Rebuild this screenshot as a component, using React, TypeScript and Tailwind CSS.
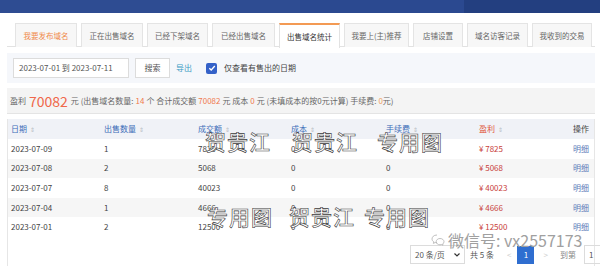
import React from "react";

const font = { fontFamily: '"Noto Sans CJK SC", "Noto Sans", sans-serif' };

const tabs = [
  { t: "我要发布域名", w: "w-[62px]", first: true },
  { t: "正在出售域名", w: "w-[62px]" },
  { t: "已经下架域名", w: "w-[61px]" },
  { t: "已经出售域名", w: "w-[63px]" },
  { t: "出售域名统计", w: "w-[61px]", active: true },
  { t: "我要上(主)推荐", w: "w-[65px]" },
  { t: "店铺设置", w: "w-[50px]" },
  { t: "域名访客记录", w: "w-[61px]" },
  { t: "我收到的交易", w: "w-[60px]" },
];

const rows = [
  ["2023-07-09", "1", "7825", "0", "0", "7825"],
  ["2023-07-08", "2", "5068", "0", "0", "5068"],
  ["2023-07-07", "8", "40023", "0", "0", "40023"],
  ["2023-07-04", "1", "4666", "0", "0", "4666"],
  ["2023-07-01", "2", "12500", "0", "0", "12500"],
];

const Sort = () => (
  <span className="ml-[3px] text-[#b8bcc4] text-[6px] leading-none">⇕</span>
);

const cols = "grid grid-cols-[93px_94px_93px_95px_93px_94px_1fr]";

const WM = ({ t, x, y }: { t: string; x: number; y: number }) => (
  <div
    className="absolute text-[21px] leading-none font-medium text-white tracking-[1px] [-webkit-text-stroke:0.6px_#3a3a3a]"
    style={{ left: x, top: y, ...font }}
  >
    {t}
  </div>
);

export default function App() {
  return (
    <div
      className="relative w-[600px] h-[266px] overflow-hidden bg-white text-[8px] text-[#444]"
      style={font}
    >
      {/* top bar */}
      <div className="flex h-[13px]">
        <div className="w-[300px] bg-[#2e4c92]" />
        <div className="w-[164px] bg-[#2b4990]" />
        <div className="flex-1 bg-[#233f80]" />
      </div>

      <div className="pl-[7px] pr-[5px]">
        {/* tabs */}
        <div className="mt-[10px] flex gap-[4px] pl-[8px] border-b border-[#e2e2e2] h-[24px]">
          {tabs.map((tb) => (
            <div
              key={tb.t}
              className={
                tb.w +
                " shrink-0 text-[7.5px] flex items-center justify-center border border-b-0 whitespace-nowrap " +
                (tb.active
                  ? "bg-white border-[#e2e2e2] border-t-[2px] border-t-[#f39a54] text-[#333] -mb-px h-[25px]"
                  : "h-[24px] bg-[#f7f7f7] border-[#e4e4e4] text-[#666]") +
                (tb.first ? " text-[#f0894a]" : "")
              }
            >
              {tb.t}
            </div>
          ))}
        </div>

        {/* filter row */}
        <div className="mt-[6px] h-[30px] bg-[#f5f7fb] flex items-center pl-[6px]">
          <div className="w-[116px] h-[20px] bg-white border border-[#dcdcdc] flex items-center pl-[5px] text-[#555]">
            2023-07-01 到 2023-07-11
          </div>
          <div className="ml-[6px] w-[35px] h-[20px] bg-white border border-[#dcdcdc] flex items-center justify-center text-[#555]">
            搜索
          </div>
          <div className="ml-[6px] text-[#3a9bc4]">导出</div>
          <div className="ml-[14px] w-[11px] h-[11px] rounded-[2px] bg-[#3461c8] flex items-center justify-center">
            <svg width="8" height="8" viewBox="0 0 8 8">
              <path d="M1.3 4.2 L3.2 6 L6.8 2" stroke="white" strokeWidth="1.3" fill="none" />
            </svg>
          </div>
          <div className="ml-[7px] text-[#444]">仅查看有售出的日期</div>
        </div>

        {/* summary */}
        <div className="mt-[5px] h-[26px] bg-[#f4f4f4] border-b border-[#e4e4e4] flex items-center pl-[3px] text-[#666] whitespace-nowrap">
          盈利 <span className="mx-[3px] text-[14px] text-[#f0674a] leading-none">70082</span> 元 (出售域名数量:{" "}
          <span className="mx-[2px] text-[#f07a4f]">14</span> 个 合计成交额{" "}
          <span className="mx-[2px] text-[#f07a4f]">70082</span> 元 成本{" "}
          <span className="mx-[2px] text-[#f07a4f]">0</span> 元 (未填成本的按0元计算) 手续费:{" "}
          <span className="ml-[2px] text-[#f0a060]">0</span>元)
        </div>

        {/* table box */}
        <div className="mt-[5px] border border-t-0 border-[#e6e6e6] h-[149px] flex flex-col">
          <div className={cols + " h-[20px] items-center bg-[#f0f2f7] pl-[3px] text-[#3c6cb8]"}>
            <div>日期<Sort /></div>
            <div>出售数量<Sort /></div>
            <div>成交额<Sort /></div>
            <div>成本<Sort /></div>
            <div>手续费<Sort /></div>
            <div className="text-[#e0573c]">盈利<Sort /></div>
            <div className="text-[#444]">操作</div>
          </div>
          {rows.map((r, i) => (
            <div
              key={r[0]}
              className={
                cols +
                " h-[19.6px] items-center pl-[3px] text-[#444] " +
                (i % 2 === 1 ? "bg-[#f6f6f6]" : "bg-white")
              }
            >
              <div>{r[0]}</div>
              <div>{r[1]}</div>
              <div>{r[2]}</div>
              <div>{r[3]}</div>
              <div>{r[4]}</div>
              <div className="text-[#c8403a]">¥ {r[5]}</div>
              <div className="text-[#5a78b8]">明细</div>
            </div>
          ))}
          <div className="flex-1 flex items-end pl-[402px] pb-[3px] text-[#555] whitespace-nowrap">
            <div className="flex items-center h-[19px] shrink-0">
              <div className="w-[55px] h-[19px] border border-[#dcdcdc] flex items-center pl-[4px] justify-between pr-[4px]">
                20 条/页
                <svg width="6" height="4" viewBox="0 0 6 4">
                  <path d="M0.5 0.5 L3 3 L5.5 0.5" stroke="#333" strokeWidth="1.2" fill="none" />
                </svg>
              </div>
              <div className="ml-[5px]">共 5 条</div>
              <div className="ml-[13px] text-[#ccc]">&lt;</div>
              <div className="ml-[6px] w-[17px] h-[18px] bg-[#2f6ed0] text-white flex items-center justify-center">1</div>
              <div className="ml-[9px] text-[#ccc]">&gt;</div>
              <div className="ml-[12px] text-[#888]">到第</div>
              <div className="ml-[8px] w-[20px] h-[19px] border border-[#dcdcdc] flex items-center pl-[4px]">1</div>
            </div>
          </div>
        </div>
      </div>

      {/* watermarks */}
      <WM t="贺贵江" x={205} y={131} />
      <WM t="贺贵江" x={292} y={131} />
      <WM t="专用图" x={377} y={131} />
      <WM t="专用图" x={207} y={206} />
      <WM t="贺贵江" x={289} y={206} />
      <WM t="专用图" x={364} y={206} />
      <div className="absolute left-[431px] top-[232px] flex items-center text-[#a0a0a0] text-[16px] leading-none">
        <svg width="14" height="12" viewBox="0 0 14 12" className="mr-[3px]">
          <path d="M6 1 C2.5 1 1 3.2 1 5 C1 6.2 1.7 7.2 2.8 7.9 L2.4 9.4 L4.2 8.5 C4.8 8.7 5.4 8.8 6 8.8" stroke="#b0b0b0" fill="none" strokeWidth="0.8" />
          <path d="M9 4.5 C11.3 4.5 13 6 13 7.7 C13 8.6 12.5 9.4 11.7 10 L12 11.2 L10.6 10.5 C10.1 10.7 9.6 10.8 9 10.8 C6.8 10.8 5.2 9.4 5.2 7.7 C5.2 6 6.8 4.5 9 4.5 Z" stroke="#b0b0b0" fill="none" strokeWidth="0.8" />
        </svg>
        微信号: vx2557173
      </div>
    </div>
  );
}
